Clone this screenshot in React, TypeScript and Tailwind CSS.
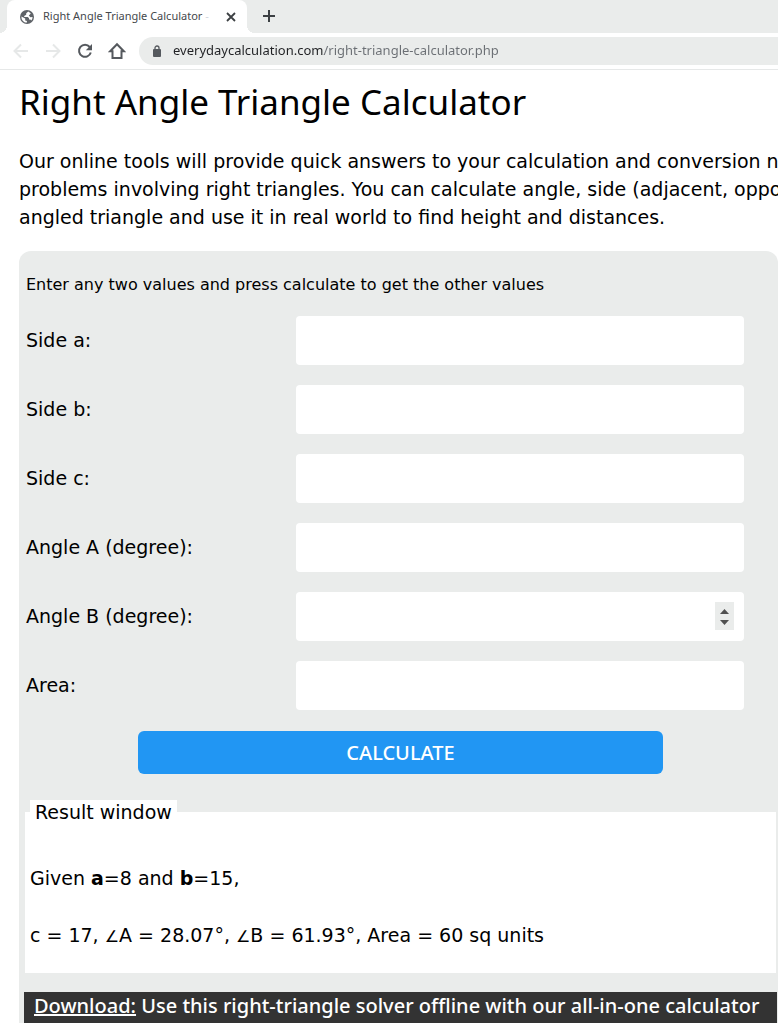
import { FC, FormEvent, ReactNode, useRef } from "react";

interface FieldProps {
  id: string;
  label: string;
  stepper?: boolean;
}

const Field: FC<FieldProps> = ({ id, label, stepper }) => {
  const ref = useRef<HTMLInputElement>(null);

  return (
    <div className="flex items-center">
      <label htmlFor={id} className="w-[270px] shrink-0 text-[19px]">
        {label}
      </label>
      <div className="relative flex-1">
        <input
          ref={ref}
          id={id}
          type="number"
          className="block h-[49px] w-full rounded bg-white px-3 text-[19px] outline-none [appearance:textfield]"
        />
        {stepper && (
          <div className="absolute top-2.5 right-2.5 flex h-7 w-[19px] flex-col bg-[#eaeceb] text-[#505050]">
            <button
              type="button"
              aria-label="Increase"
              className="flex flex-1 items-center justify-center pt-1"
              onClick={() => ref.current?.stepUp()}
            >
              <svg width="9" height="5" viewBox="0 0 9 5">
                <path d="M4.5 0 9 5H0z" fill="currentColor" />
              </svg>
            </button>
            <button
              type="button"
              aria-label="Decrease"
              className="flex flex-1 items-center justify-center pb-0.5"
              onClick={() => ref.current?.stepDown()}
            >
              <svg width="9" height="5" viewBox="0 0 9 5">
                <path d="M4.5 5 0 0h9z" fill="currentColor" />
              </svg>
            </button>
          </div>
        )}
      </div>
    </div>
  );
};

interface IconButtonProps {
  label: string;
  className?: string;
  children: ReactNode;
}

const IconButton: FC<IconButtonProps> = ({ label, className, children }) => (
  <button
    type="button"
    aria-label={label}
    className={`flex size-5 shrink-0 items-center justify-center ${className ?? ""}`}
  >
    {children}
  </button>
);

const TabStrip: FC = () => (
  <div className="flex h-[33px] items-end bg-[#eaeceb] pl-[7px]">
    <div className="relative flex h-[33px] w-60 items-center rounded-t-lg bg-white pr-1.5 pl-3">
      <span className="absolute bottom-0 -left-2 size-2 bg-[radial-gradient(circle_at_0_0,#eaeceb_8px,#fff_8px)]" />
      <span className="absolute -right-2 bottom-0 size-2 bg-[radial-gradient(circle_at_100%_0,#eaeceb_8px,#fff_8px)]" />
      <svg className="size-4 shrink-0" viewBox="0 0 16 16">
        <circle cx="8" cy="8" r="7" fill="#5f6368" />
        <path
          d="M9.2 2.4 7.2 4.2v1.6L5.2 7v1h3.6L10 9.200v1.200h1.400l.9 1.200A5.600 5.600 0 0 0 13.600 8l-2.200.2-1.600-1.800 2-1.800A5.600 5.600 0 0 0 9.200 2.400zM2.400 7.600 6.200 9.600v1.800l1.800.6-.4 1.700A5.600 5.600 0 0 1 2.400 7.600z"
          fill="#fff"
        />
      </svg>
      <span className="ml-2 flex-1 overflow-hidden text-[11px] whitespace-nowrap text-[#45484c]">
        Right Angle Triangle Calculator <span className="text-gray-300">-</span>
      </span>
      <IconButton label="Close tab" className="text-[#3c4043]">
        <svg width="10" height="10" viewBox="0 0 10 10">
          <path d="m1 1 8 8M9 1 1 9" stroke="currentColor" strokeWidth="1.8" />
        </svg>
      </IconButton>
    </div>
    <IconButton label="New tab" className="mb-[7px] ml-3 text-[#3c4043]">
      <svg width="12" height="12" viewBox="0 0 12 12">
        <path d="M6 0v12M0 6h12" stroke="currentColor" strokeWidth="2" />
      </svg>
    </IconButton>
  </div>
);

const Toolbar: FC = () => (
  <div className="flex h-[37px] items-center gap-3 border-b border-[#e6e8e8] pl-[11px]">
    <IconButton label="Back" className="text-[#e6e8e8]">
      <svg width="16" height="16" viewBox="0 0 16 16" fill="none">
        <path d="M15 8H2M8 1.5 1.5 8 8 14.5" stroke="currentColor" strokeWidth="2" />
      </svg>
    </IconButton>
    <IconButton label="Forward" className="text-[#e6e8e8]">
      <svg width="16" height="16" viewBox="0 0 16 16" fill="none">
        <path d="M1 8h13M8 1.5 14.5 8 8 14.5" stroke="currentColor" strokeWidth="2" />
      </svg>
    </IconButton>
    <IconButton label="Reload" className="text-[#55595e]">
      <svg width="16" height="16" viewBox="0 0 16 16" fill="none">
        <path d="M12.7 4A6 6 0 1 0 13.8 9.5" stroke="currentColor" strokeWidth="2" />
        <path d="M15 1v6.2H8.8z" fill="currentColor" />
      </svg>
    </IconButton>
    <IconButton label="Home" className="text-[#55595e]">
      <svg width="18" height="18" viewBox="0 0 18 18" fill="none">
        <path
          d="M2.2 9.2 9 2.2l6.8 7h-2.3V16h-9V9.2z"
          stroke="currentColor"
          strokeWidth="2"
        />
      </svg>
    </IconButton>
    <div className="flex h-7 flex-1 items-center rounded-l-full bg-[#eaeceb] pl-3.5">
      <svg width="8" height="12" viewBox="0 0 8 12" className="shrink-0">
        <path d="M2 5V3a2 2 0 0 1 4 0v2" fill="none" stroke="#55595e" strokeWidth="1.3" />
        <rect y="4" width="8" height="8" rx="1" fill="#55595e" />
      </svg>
      {/* the host part of the address is darker than its path */}
      <input
        type="text"
        aria-label="Address"
        defaultValue="everydaycalculation.com/right-triangle-calculator.php"
        className="ml-3 w-full bg-[linear-gradient(90deg,#202124_151px,#6b6f74_151px)] bg-clip-text text-[13px] text-transparent outline-none"
      />
    </div>
  </div>
);

const fields: FieldProps[] = [
  { id: "side-a", label: "Side a:" },
  { id: "side-b", label: "Side b:" },
  { id: "side-c", label: "Side c:" },
  { id: "angle-a", label: "Angle A (degree):" },
  { id: "angle-b", label: "Angle B (degree):", stepper: true },
  { id: "area", label: "Area:" },
];

const Angle: FC = () => <span className="text-base">∠</span>;

const App: FC = () => {
  const handleSubmit = (e: FormEvent) => e.preventDefault();

  return (
    <div className="min-h-screen overflow-hidden bg-white font-['DejaVu_Sans',Verdana,sans-serif] text-black">
      <header className="font-['Noto_Sans','Open_Sans',sans-serif]">
        <TabStrip />
        <Toolbar />
      </header>

      <main className="pl-[19px]">
        <h1 className="mt-1 font-['Noto_Sans','Open_Sans',sans-serif] text-[35px] leading-[56px]">
          Right Angle Triangle Calculator
        </h1>
        <p className="mt-[17px] text-[19px] leading-7 whitespace-nowrap">
          Our online tools will provide quick answers to your calculation and conversion needs
          <br />
          problems involving right triangles. You can calculate angle, side (adjacent, opposite
          <br />
          angled triangle and use it in real world to find height and distances.
        </p>

        <section className="mt-5 rounded-t-xl bg-[#eaeceb] pt-5">
          <form onSubmit={handleSubmit} className="pr-[34px] pl-[7px]">
            <p className="text-base leading-7">
              Enter any two values and press calculate to get the other values
            </p>
            <div className="mt-[17px] flex flex-col gap-5">
              {fields.map((field) => (
                <Field key={field.id} {...field} />
              ))}
            </div>
            <div className="mt-[21px] pr-[81px] pl-28">
              <button
                type="submit"
                className="block h-[43px] w-full rounded-md bg-[#2196f3] font-['Noto_Sans',sans-serif] text-xl font-medium text-white"
              >
                CALCULATE
              </button>
            </div>
          </form>

          <fieldset className="mt-[26px] mr-0.5 ml-1.5 h-[173px] bg-white px-[5px]">
            <legend className="bg-white px-[5px] text-[19px] leading-6">Result window</legend>
            <p className="mt-10 text-[19px] leading-7">
              Given <b>a</b>=8 and <b>b</b>=15,
            </p>
            <p className="mt-[29px] text-[19px] leading-7">
              c = 17, <Angle />A = 28.07°, <Angle />B = 61.93°, Area = 60 sq units
            </p>
          </fieldset>

          <p className="mt-[19px] mr-px ml-[5px] bg-[#333] px-2.5 pb-1 font-['Noto_Sans',sans-serif] text-xl leading-7 font-medium whitespace-nowrap text-white">
            <a href="#download" className="underline">
              Download:
            </a>{" "}
            Use this right-triangle solver offline with our all-in-one calculator
          </p>
        </section>
      </main>
    </div>
  );
};

export default App;
